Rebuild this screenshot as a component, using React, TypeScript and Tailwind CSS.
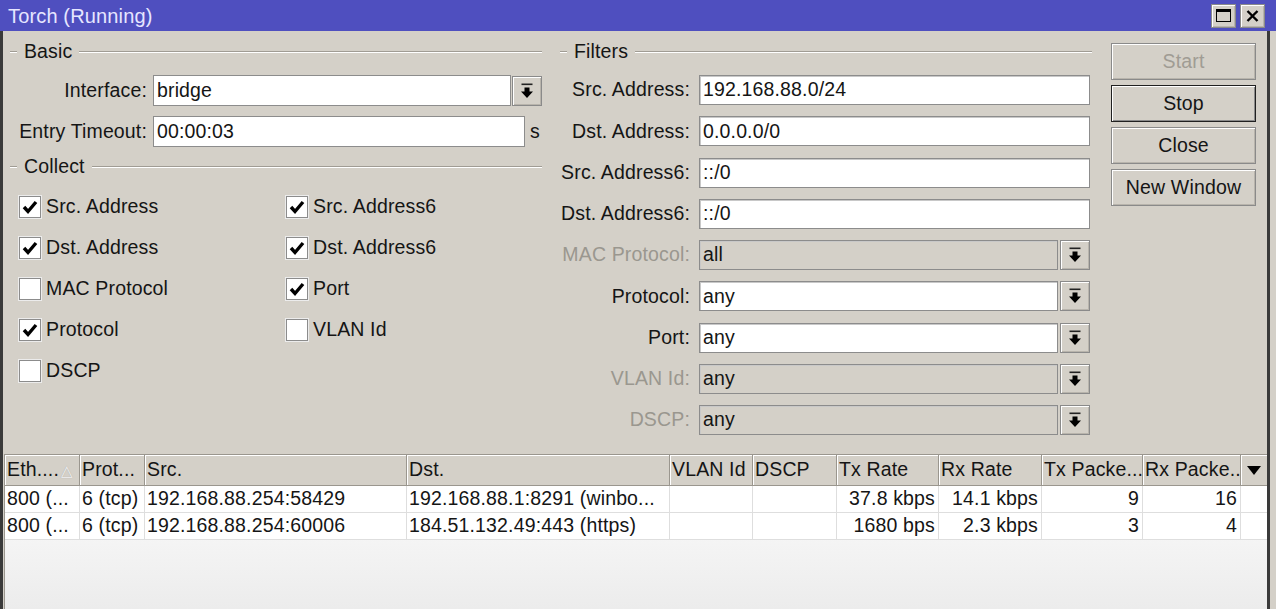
import type { ReactNode } from "react";

// Windows-classic torch window (WinBox look)

const bevel =
  "border border-[#8a8a8a] shadow-[inset_1px_1px_0_#ffffff,inset_-1px_-1px_0_#b8b4ac]";

function DropIcon() {
  return (
    <svg width="14" height="16" viewBox="0 0 14 16">
      <rect x="1.5" y="0.5" width="11" height="1.6" fill="#222" />
      <path d="M4.5 4.5h5v4h3.5l-6 6.5-6-6.5h3.5z" fill="#000" />
    </svg>
  );
}

function DropButton() {
  return (
    <div className={`flex h-[30px] w-[30px] shrink-0 items-center justify-center bg-[#d4d0c8] ${bevel}`}>
      <DropIcon />
    </div>
  );
}

function Field({
  value,
  width,
  disabled,
}: {
  value: string;
  width: number;
  disabled?: boolean;
}) {
  return (
    <div
      style={{ width }}
      className={`flex h-[30px] shrink-0 items-center border border-[#8c8c8c] pl-[3px] shadow-[inset_1px_1px_0_#c8c8c8] ${
        disabled ? "bg-[#d4d0c8]" : "bg-white"
      }`}
    >
      {value}
    </div>
  );
}

function Legend({ title, line }: { title: string; line: number }) {
  return (
    <div className="flex h-[22px] items-center">
      <div className="h-0 w-[7px] border-t border-b border-t-[#a09c94] border-b-white" />
      <span className="px-[7px]">{title}</span>
      <div
        style={{ width: line }}
        className="h-0 border-t border-b border-t-[#a09c94] border-b-white"
      />
    </div>
  );
}

function Check({ label, checked }: { label: string; checked?: boolean }) {
  return (
    <div className="flex h-[41px] items-center gap-[5px]">
      <div className="flex h-[22px] w-[22px] items-center justify-center border border-[#8c8c8c] bg-white shadow-[0_0_0_1px_#ececec]">
        {checked && (
          <svg width="16" height="16" viewBox="0 0 16 16">
            <path d="M2 8l4 4.5L14 3" fill="none" stroke="#000" strokeWidth="3.4" />
          </svg>
        )}
      </div>
      <span>{label}</span>
    </div>
  );
}

function FilterRow({
  label,
  value,
  disabled,
  drop,
}: {
  label: string;
  value: string;
  disabled?: boolean;
  drop?: boolean;
}) {
  return (
    <div className="flex h-[30px] items-center">
      <span className={`w-[134px] whitespace-nowrap text-right ${disabled ? "text-[#9a978f]" : ""}`}>
        {label}
      </span>
      <div className="ml-[9px] flex items-center gap-[2px]">
        <Field value={value} width={drop ? 359 : 391} disabled={disabled} />
        {drop && <DropButton />}
      </div>
    </div>
  );
}

function Btn({ children, disabled, main }: { children: ReactNode; disabled?: boolean; main?: boolean }) {
  return (
    <div
      className={`flex h-[37px] w-[145px] items-center justify-center bg-[#d4d0c8] ${
        main
          ? "border border-[#202020] shadow-[inset_1px_1px_0_#ffffff,inset_-1px_-1px_0_#8a8a8a]"
          : bevel
      } ${disabled ? "text-[#a09c94]" : ""}`}
    >
      {children}
    </div>
  );
}

const COLS =
  "grid grid-cols-[75px_65px_262px_263px_83px_84px_102px_103px_101px_98px_26px]";

const ROWS = [
  ["800 (...", "6 (tcp)", "192.168.88.254:58429", "192.168.88.1:8291 (winbo...", "", "", "37.8 kbps", "14.1 kbps", "9", "16"],
  ["800 (...", "6 (tcp)", "192.168.88.254:60006", "184.51.132.49:443 (https)", "", "", "1680 bps", "2.3 kbps", "3", "4"],
];

export default function App() {
  const head = ["Eth....", "Prot...", "Src.", "Dst.", "VLAN Id", "DSCP", "Tx Rate", "Rx Rate", "Tx Packe...", "Rx Packe.."];

  return (
    <div className="flex h-[609px] w-[1276px] flex-col overflow-hidden bg-[#d4d0c8] font-['Liberation_Sans',Tahoma,sans-serif] text-[19.5px] leading-none tracking-[0.15px] text-[#151515]">
      {/* title bar */}
      <div className="flex h-[31px] shrink-0 items-center justify-between bg-[#4f4fbf] pl-[8px] pr-[11px]">
        <span className="text-[20px] text-[#e6e6ff]">Torch (Running)</span>
        <div className="flex gap-[4px]">
          <div className={`flex h-[24px] w-[25px] items-center justify-center bg-[#d4d0c8] ${bevel}`}>
            <svg width="15" height="13" viewBox="0 0 15 13">
              <rect x="0.5" y="0.5" width="14" height="12" fill="none" stroke="#000" />
              <rect x="0.5" y="0.5" width="14" height="2.5" fill="#000" />
            </svg>
          </div>
          <div className={`flex h-[24px] w-[25px] items-center justify-center bg-[#d4d0c8] ${bevel}`}>
            <svg width="13" height="12" viewBox="0 0 13 12">
              <path d="M1.5 1l10 10M11.5 1l-10 10" stroke="#000" strokeWidth="2.4" />
            </svg>
          </div>
        </div>
      </div>

      <div className="mr-[6px] flex flex-1 flex-col border-l-[3px] border-r-[3px] border-l-[#3a3a3a] border-r-[#3a3a3a]">
        {/* settings area */}
        <div className="flex h-[423px] shrink-0 pl-[7px]">
          {/* basic + collect */}
          <div className="flex w-[532px] flex-col pt-[10px]">
            <Legend title="Basic" line={466} />
            <div className="mt-[12px] flex h-[31px] items-center">
              <span className="w-[137px] whitespace-nowrap text-right">Interface:</span>
              <div className="ml-[6px] flex items-center gap-[1px]">
                <div className="flex h-[31px] w-[358px] items-center border border-[#8c8c8c] bg-white pl-[3px]">bridge</div>
                <DropButton />
              </div>
            </div>
            <div className="mt-[10px] flex h-[31px] items-center">
              <span className="w-[137px] whitespace-nowrap text-right">Entry Timeout:</span>
              <div className="ml-[6px] flex h-[31px] w-[372px] items-center border border-[#8c8c8c] bg-white pl-[3px]">00:00:03</div>
              <span className="ml-[5px]">s</span>
            </div>
            <div className="mt-[9px]">
              <Legend title="Collect" line={450} />
            </div>
            <div className="mt-[8px] grid grid-cols-[267px_1fr] pl-[9px]">
              <Check label="Src. Address" checked />
              <Check label="Src. Address6" checked />
              <Check label="Dst. Address" checked />
              <Check label="Dst. Address6" checked />
              <Check label="MAC Protocol" />
              <Check label="Port" checked />
              <Check label="Protocol" checked />
              <Check label="VLAN Id" />
              <Check label="DSCP" />
            </div>
          </div>

          {/* filters */}
          <div className="ml-[14px] flex w-[536px] flex-col pt-[10px]">
            <div className="ml-[4px]">
              <Legend title="Filters" line={462} />
            </div>
            <div className="mt-[12px] flex flex-col gap-[11.25px]">
              <FilterRow label="Src. Address:" value="192.168.88.0/24" />
              <FilterRow label="Dst. Address:" value="0.0.0.0/0" />
              <FilterRow label="Src. Address6:" value="::/0" />
              <FilterRow label="Dst. Address6:" value="::/0" />
              <FilterRow label="MAC Protocol:" value="all" disabled drop />
              <FilterRow label="Protocol:" value="any" drop />
              <FilterRow label="Port:" value="any" drop />
              <FilterRow label="VLAN Id:" value="any" disabled drop />
              <FilterRow label="DSCP:" value="any" disabled drop />
            </div>
          </div>

          {/* buttons */}
          <div className="ml-[19px] flex flex-col gap-[5px] pt-[12px]">
            <Btn disabled>Start</Btn>
            <Btn main>Stop</Btn>
            <Btn>Close</Btn>
            <Btn>New Window</Btn>
          </div>
        </div>

        {/* table */}
        <div className="ml-[1px] flex flex-1 flex-col border-t border-l border-[#9a968e] bg-gradient-to-b from-white to-[#ececec]">
          <div className={`${COLS} h-[31px] bg-[#d4d0c8]`}>
            {head.map((h, i) => (
              <div
                key={h}
                className="flex items-center overflow-hidden whitespace-nowrap border-r border-b border-r-[#9a968e] border-b-[#9a968e] pl-[2px] shadow-[inset_1px_1px_0_#ffffff]"
              >
                {h}
                {i === 0 && <span className="ml-[2px] text-[15px] text-[#f4f4f4] [text-shadow:0_0_1px_#999]">△</span>}
              </div>
            ))}
            <div className="flex items-center justify-center border-b border-b-[#9a968e] shadow-[inset_1px_1px_0_#ffffff]">
              <svg width="14" height="9" viewBox="0 0 14 9">
                <path d="M0 0h14L7 9z" fill="#000" />
              </svg>
            </div>
          </div>
          {ROWS.map((r, ri) => (
            <div key={ri} className={`${COLS} h-[27px] bg-white`}>
              {r.map((c, ci) => (
                <div
                  key={ci}
                  className={`flex items-center overflow-hidden whitespace-nowrap border-r border-b border-[#dedede] ${
                    ci >= 6 ? "justify-end pr-[3px]" : "pl-[2px]"
                  }`}
                >
                  {c}
                </div>
              ))}
              <div className="border-b border-[#dedede]" />
            </div>
          ))}
        </div>
      </div>
    </div>
  );
}
